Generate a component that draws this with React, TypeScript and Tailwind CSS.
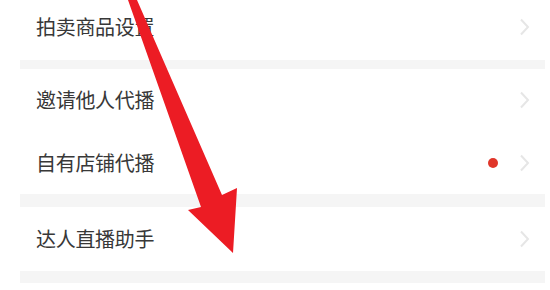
import type { ReactNode } from 'react';

function Chevron() {
	return (
		<svg width="11" height="18" viewBox="0 0 11 18" className="shrink-0">
			<path d="M2 1.5 L9 9 L2 16.5" fill="none" stroke="#e6e6e6" strokeWidth="2" />
		</svg>
	);
}

function Row({
	label,
	badge,
	height = 'h-[64px]',
}: {
	label: string;
	badge?: ReactNode;
	height?: string;
}) {
	return (
		<div className={`flex items-center justify-between pl-4 pr-[15px] ${height}`}>
			<span className="text-[20px] tracking-[-0.3px] text-[#383838]">{label}</span>
			<div className="flex items-center gap-[21px]">
				{badge}
				<Chevron />
			</div>
		</div>
	);
}

function Gap({ h }: { h: string }) {
	return <div className={`bg-[#f5f5f5] ${h}`} />;
}

export default function App() {
	return (
		<div
			className="relative h-[290px] w-[550px] overflow-hidden bg-white"
			style={{ fontFamily: '"Noto Sans CJK SC", "Noto Sans", sans-serif' }}
		>
			<div className="ml-5 mr-[5px] -mt-[7px]">
				<Row label="拍卖商品设置" height="h-[67px]" />
				<Gap h="h-[9px]" />
				<Row label="邀请他人代播" height="h-[62px]" />
				<Row
					label="自有店铺代播"
					height="h-[63px]"
					badge={<span className="h-[10px] w-[10px] rounded-full bg-[#e0362a]" />}
				/>
				<Gap h="h-[13px]" />
				<Row label="达人直播助手" height="h-[64px]" />
				<Gap h="h-[12px]" />
			</div>

			<svg
				className="pointer-events-none absolute left-0 top-0"
				width="550"
				height="290"
				viewBox="0 0 550 290"
			>
				<polygon
					points="128,0 137,0 222,195 237,188 233,253 188,210 201,207"
					fill="#ec1c24"
				/>
			</svg>
		</div>
	);
}
